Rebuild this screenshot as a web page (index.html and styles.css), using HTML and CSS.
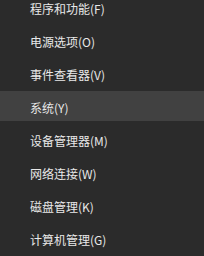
FILE: index.html
```html
<!DOCTYPE html>
<html lang="zh-CN">
<head>
<meta charset="utf-8">
<link rel="stylesheet" href="styles.css">
</head>
<body>
<ul class="menu">
  <li class="item">程序和功能(F)</li>
  <li class="item">电源选项(O)</li>
  <li class="item">事件查看器(V)</li>
  <li class="item active">系统(Y)</li>
  <li class="item">设备管理器(M)</li>
  <li class="item">网络连接(W)</li>
  <li class="item">磁盘管理(K)</li>
  <li class="item">计算机管理(G)</li>
</ul>
</body>
</html>
```
FILE: styles.css
```css
html, body {
  margin: 0;
  padding: 0;
  background: #2b2b2b;
  width: 204px;
  height: 256px;
  overflow: hidden;
}
.menu {
  list-style: none;
  margin: -8px 0 0 0;
  padding: 0;
  display: flex;
  flex-direction: column;
  gap: 3px;
}
.item {
  height: 30px;
  box-sizing: border-box;
  padding: 3px 0 0 30px;
  line-height: 27px;
  font-family: "Noto Sans CJK SC", "Noto Sans", sans-serif;
  font-size: 12px;
  color: #e8e8e8;
  white-space: nowrap;
}
.active {
  background: #414141;
}
```
